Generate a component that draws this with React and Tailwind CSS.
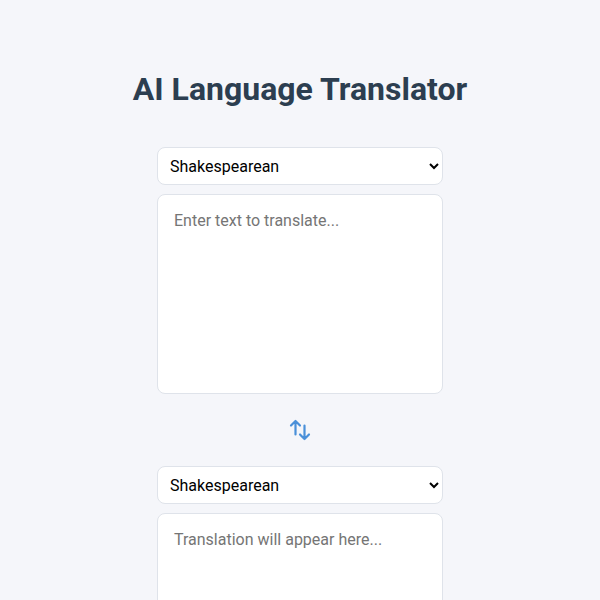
const LANGS = ["Shakespearean", "Pirate", "Yoda", "Formal English", "Gen Z Slang"];

function LangSelect() {
  return (
    <select
      defaultValue="Shakespearean"
      className="w-full h-[38px] px-2 rounded-lg border border-[#dfe3ea] bg-white text-base text-black font-['Roboto',sans-serif]"
    >
      {LANGS.map((l) => (
        <option key={l}>{l}</option>
      ))}
    </select>
  );
}

function SwapIcon() {
  return (
    <svg viewBox="0 0 24 24" fill="none" stroke="currentColor" strokeWidth="2.2" strokeLinecap="round" strokeLinejoin="round" className="w-6 h-6 text-[#4a90d9]">
      <path d="M3 7.5 7.5 3m0 0L12 7.5M7.5 3v13.5m13.5 0L16.5 21m0 0L12 16.5m4.5 4.5V7.5" />
    </svg>
  );
}

export default function App() {
  return (
    <div className="min-h-screen bg-[#f5f6fa] font-['Roboto',sans-serif] flex flex-col items-center pt-[70px]">
      <h1 className="text-[32px] leading-[38px] font-bold text-[#2c3e50] mb-[39px]">AI Language Translator</h1>
      <div className="w-[286px] flex flex-col">
        <LangSelect />
        <textarea
          placeholder="Enter text to translate..."
          className="mt-[9px] h-[200px] w-full resize-none rounded-lg border border-[#dfe3ea] bg-white px-4 py-[14px] text-base placeholder:text-[#757575] outline-none"
        />
        <div className="flex justify-center py-6">
          <button type="button" className="cursor-pointer">
            <SwapIcon />
          </button>
        </div>
        <LangSelect />
        <textarea
          readOnly
          placeholder="Translation will appear here..."
          className="mt-[9px] h-[200px] w-full resize-none rounded-lg border border-[#dfe3ea] bg-white px-4 py-[14px] text-base placeholder:text-[#757575] outline-none"
        />
      </div>
    </div>
  );
}
